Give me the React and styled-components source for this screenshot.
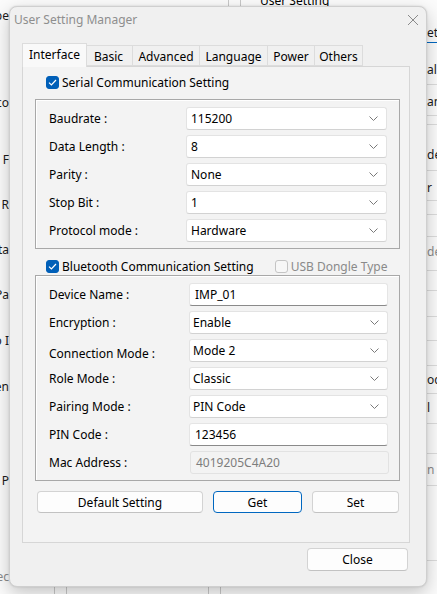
import React from "react";
import styled, { createGlobalStyle } from "styled-components";

const GlobalStyle = createGlobalStyle`
  html, body {
    margin: 0;
    padding: 0;
  }
  body {
    width: 437px;
    height: 594px;
    overflow: hidden;
    background: #fbfbfb;
    font-family: "Noto Sans", "Segoe UI", sans-serif;
    font-size: 12px;
    color: #000;
  }
`;

const Desktop = styled.div`
  position: relative;
  width: 437px;
  height: 594px;
  overflow: hidden;
  background: #fbfbfb;
`;

// --- the window behind the dialog, only its edges show ---
const BackWindow = styled.div`
  display: flex;
  height: 594px;
`;

const BackLeft = styled.div`
  width: 9px;
  display: flex;
  flex-direction: column;
  overflow: hidden;
`;

const BackLabel = styled.div`
  height: 14px;
  margin-top: ${(p) => p.gap}px;
  display: flex;
  justify-content: flex-end;
  white-space: nowrap;
  line-height: 14px;
  color: ${(p) => (p.dim ? "#8a8a8a" : "#1a1a1a")};
`;

const BackMiddle = styled.div`
  flex: 1;
  display: flex;
  flex-direction: column;
  justify-content: space-between;
`;

const BackStrip = styled.div`
  height: ${(p) => p.h}px;
  display: flex;
  align-items: ${(p) => (p.top ? "flex-end" : "flex-start")};
  padding-left: 219px;
  gap: 11px;
  overflow: hidden;
`;

const Divider = styled.div`
  width: 1px;
  height: 100%;
  background: #c8c8c8;
  margin-left: ${(p) => p.ml || 0}px;
`;

const BackHeading = styled.span`
  margin-left: 8px;
  line-height: 14px;
  height: 14px;
  align-self: flex-end;
  margin-bottom: -2px;
  white-space: nowrap;
`;

const BackRight = styled.div`
  width: 10px;
  display: flex;
  flex-direction: column;
  overflow: hidden;
`;

const BackRow = styled.div`
  height: ${(p) => p.h + 1}px;
  box-sizing: border-box;
  border-bottom: 1px solid ${(p) => (p.accent ? "#0067c0" : "#dcdcdc")};
  display: flex;
  align-items: flex-end;
  padding-bottom: ${(p) => p.pb || 0}px;
  white-space: nowrap;
  line-height: 14px;
  color: ${(p) => (p.dim ? "#8a8a8a" : "#1a1a1a")};
`;

// --- dialog ---
const Dialog = styled.div`
  position: absolute;
  left: 9px;
  top: 6px;
  width: 418px;
  height: 581px;
  box-sizing: border-box;
  background: #f0f0f0;
  border: 1px solid #cfcfcf;
  border-radius: 8px;
  box-shadow: 0 6px 18px rgba(0, 0, 0, 0.22), 0 0 2px rgba(0, 0, 0, 0.15);
  display: flex;
  flex-direction: column;
`;

const TitleBar = styled.div`
  height: 24px;
  display: flex;
  align-items: center;
  justify-content: space-between;
  padding: 0 7px 0 4px;
`;

const Title = styled.span`
  font-size: 12px;
  color: #8e8e8e;
`;

const CloseX = styled.svg`
  width: 12px;
  height: 12px;
  margin-top: 1px;
`;

const Body = styled.div`
  padding: 12px 16px 0 12px;
  display: flex;
  flex-direction: column;
`;

const TabBar = styled.div`
  display: flex;
  align-items: flex-end;
  height: 23px;
  position: relative;
  z-index: 1;
`;

const Tab = styled.div`
  width: ${(p) => p.w}px;
  box-sizing: border-box;
  height: ${(p) => (p.active ? 24 : 21)}px;
  margin-bottom: ${(p) => (p.active ? -1 : 0)}px;
  margin-right: ${(p) => (p.active ? -2 : 0)}px;
  display: flex;
  align-items: center;
  justify-content: center;
  background: ${(p) => (p.active ? "#f9f9f9" : "#f0f0f0")};
  border: 1px solid #dcdcdc;
  border-left: ${(p) => (p.active ? "1px solid #dcdcdc" : "none")};
  border-bottom: ${(p) => (p.active ? "none" : "1px solid #dcdcdc")};
  padding-bottom: ${(p) => (p.active ? 3 : 0)}px;
  padding-top: ${(p) => (p.active ? 0 : 2)}px;
  font-size: 12px;
  position: relative;
  z-index: ${(p) => (p.active ? 2 : 1)};
`;

const Panel = styled.div`
  height: 477px;
  box-sizing: border-box;
  border: 1px solid #d6d6d6;
  background: #f3f3f3;
  padding: 8px 10px 0 23px;
  display: flex;
  flex-direction: column;
`;

const CheckRow = styled.div`
  display: flex;
  align-items: center;
  height: 14px;
  margin-bottom: ${(p) => p.mb}px;
  margin-top: ${(p) => p.mt || 0}px;
`;

const CheckItem = styled.label`
  display: flex;
  align-items: center;
  gap: 3px;
  color: ${(p) => (p.disabled ? "#8a8a8a" : "#000")};
  margin-left: ${(p) => p.ml || 0}px;
  font-size: 12px;
  white-space: nowrap;
`;

const Box = styled.span`
  width: 13px;
  height: 13px;
  box-sizing: border-box;
  border-radius: 3px;
  display: inline-flex;
  align-items: center;
  justify-content: center;
  background: ${(p) => (p.checked ? "#005fb8" : "#f7f7f7")};
  border: 1px solid ${(p) => (p.checked ? "#005fb8" : "#c4c4c4")};
`;

const Group = styled.div`
  margin-left: -11px;
  width: 365px;
  box-sizing: border-box;
  border: 1px solid #a8a8a8;
  box-shadow: inset 1px 1px 0 #fff;
  padding: 7px 12px 6px 13px;
  display: flex;
  flex-direction: column;
  gap: 5px;
`;

const Row = styled.div`
  display: grid;
  grid-template-columns: ${(p) => p.col}px 1fr;
  align-items: center;
  height: 23px;
`;

const Label = styled.span`
  font-size: 12px;
  color: #000;
  position: relative;
  top: ${(p) => p.dy || 0}px;
`;

const Combo = styled.div`
  height: 23px;
  width: ${(p) => p.w}px;
  box-sizing: border-box;
  background: #fff;
  border: 1px solid #e3e3e3;
  border-bottom-color: #d2d2d2;
  border-radius: 3px;
  display: flex;
  align-items: center;
  justify-content: space-between;
  padding: 0 8px 0 ${(p) => p.pl}px;
  font-size: 12px;
`;

const Field = styled.div`
  height: 23px;
  width: 199px;
  box-sizing: border-box;
  background: ${(p) => (p.disabled ? "#f3f3f3" : "#fff")};
  border: 1px solid ${(p) => (p.disabled ? "#e2e2e2" : "#e5e5e5")};
  border-bottom-color: ${(p) => (p.disabled ? "#e2e2e2" : "#8a8a8a")};
  border-radius: 3px;
  display: flex;
  align-items: center;
  padding-left: 5px;
  margin-left: ${(p) => (p.disabled ? 1 : 0)}px;
  color: ${(p) => (p.disabled ? "#7d7d7d" : "#000")};
  font-size: 12px;
`;

const ButtonRow = styled.div`
  display: flex;
  gap: 10px;
  margin: 10px 0 0 -9px;
`;

const Button = styled.button`
  width: ${(p) => p.w}px;
  height: ${(p) => p.h || 22}px;
  box-sizing: border-box;
  background: #fdfdfd;
  border: 1px solid ${(p) => (p.primary ? "#0067c0" : "#d3d3d3")};
  border-bottom-color: ${(p) => (p.primary ? "#0067c0" : "#c2c2c2")};
  border-radius: 4px;
  font-family: "Noto Sans", "Segoe UI", sans-serif;
  font-size: 12px;
  color: #000;
  padding: 0;
`;

const Footer = styled.div`
  display: flex;
  justify-content: flex-end;
  padding: 5px 2px 0 0;
`;

const Chevron = () => (
  <svg width="9" height="5" viewBox="0 0 9 5">
    <path d="M0.5 0.5 L4.5 4.5 L8.5 0.5" fill="none" stroke="#7a7a7a" strokeWidth="1" />
  </svg>
);

const Check = ({ checked, disabled, children, ml }) => (
  <CheckItem disabled={disabled} ml={ml}>
    <Box checked={checked}>
      {checked && (
        <svg width="9" height="7" viewBox="0 0 9 7">
          <path d="M1 3.6 L3.4 6 L8 1" fill="none" stroke="#fff" strokeWidth="1.2" />
        </svg>
      )}
    </Box>
    {children}
  </CheckItem>
);

const serialRows = [
  ["Baudrate :", "115200"],
  ["Data Length :", "8"],
  ["Parity :", "None"],
  ["Stop Bit :", "1"],
  ["Protocol mode :", "Hardware"],
];

const btRows = [
  { label: "Device Name :", value: "IMP_01", kind: "field" },
  { label: "Encryption :", value: "Enable", kind: "combo" },
  { label: "Connection Mode :", value: "Mode 2", kind: "combo", dy: 3 },
  { label: "Role Mode :", value: "Classic", kind: "combo" },
  { label: "Pairing Mode :", value: "PIN Code", kind: "combo" },
  { label: "PIN Code :", value: "123456", kind: "field" },
  { label: "Mac Address :", value: "4019205C4A20", kind: "disabled" },
];

const tabs = [
  ["Interface", 65],
  ["Basic", 48],
  ["Advanced", 67],
  ["Language", 68],
  ["Power", 47],
  ["Others", 48],
];

// tails of the labels of the window behind (text, gap above)
const backLeft = [
  ["Type", 9],
  ["Protoco", 73],
  ["F", 43],
  ["R", 31],
  ["Data", 31],
  ["Pa", 31],
  ["Auto I", 32],
  ["Open", 32],
  ["P", 80],
  ["Connec", 82, true],
];

// rows of the list on the right of the window behind (text, height, bottom pad)
const backRight = [
  ["ettings", 42, 2, "accent"],
  ["al", 41, 7],
  ["and", 30, 6],
  ["", 8],
  ["de", 45, 8],
  ["r", 29, 5],
  ["", 13],
  ["", 21],
  ["de", 33, 11, "dim"],
  ["", 19],
  ["", 25],
  ["", 23],
  ["", 24],
  ["oc", 27, 6],
  ["l", 29, 8],
  ["", 29],
  ["n", 31, 8, "dim"],
  ["", 74],
];

const Background = () => (
  <BackWindow>
    <BackLeft>
      {backLeft.map(([text, gap, dim], i) => (
        <BackLabel key={i} gap={gap} dim={dim}>
          {text}
        </BackLabel>
      ))}
    </BackLeft>
    <BackMiddle>
      <BackStrip h={6} top>
        <Divider />
        <Divider />
        <BackHeading>User Setting</BackHeading>
      </BackStrip>
      <BackStrip h={7}>
        <Divider ml={-174} />
        <Divider />
        <Divider ml={130} />
        <Divider />
      </BackStrip>
    </BackMiddle>
    <BackRight>
      {backRight.map(([text, h, pb, mode], i) => (
        <BackRow key={i} h={h} pb={pb} accent={mode === "accent"} dim={mode === "dim"}>
          {text}
        </BackRow>
      ))}
    </BackRight>
  </BackWindow>
);

export default function App() {
  return (
    <Desktop>
      <GlobalStyle />
      <Background />
      <Dialog>
        <TitleBar>
          <Title>User Setting Manager</Title>
          <CloseX viewBox="0 0 12 12">
            <path d="M1 1 L11 11 M11 1 L1 11" stroke="#8a8a8a" strokeWidth="1" />
          </CloseX>
        </TitleBar>
        <Body>
          <TabBar>
            {tabs.map(([name, w], i) => (
              <Tab key={name} w={w} active={i === 0}>
                {name}
              </Tab>
            ))}
          </TabBar>
          <Panel>
            <CheckRow mb={10}>
              <Check checked>Serial Communication Setting</Check>
            </CheckRow>
            <Group>
              {serialRows.map(([label, value]) => (
                <Row key={label} col={137}>
                  <Label>{label}</Label>
                  <Combo w={201} pl={4}>
                    <span>{value}</span>
                    <Chevron />
                  </Combo>
                </Row>
              ))}
            </Group>
            <CheckRow mt={10} mb={2}>
              <Check checked>Bluetooth Communication Setting</Check>
              <Check disabled ml={21}>USB Dongle Type</Check>
            </CheckRow>
            <Group>
              {btRows.map((r) => (
                <Row key={r.label} col={140}>
                  <Label dy={r.dy}>{r.label}</Label>
                  {r.kind === "combo" ? (
                    <Combo w={199} pl={3}>
                      <span>{r.value}</span>
                      <Chevron />
                    </Combo>
                  ) : (
                    <Field disabled={r.kind === "disabled"}>{r.value}</Field>
                  )}
                </Row>
              ))}
            </Group>
            <ButtonRow>
              <Button w={166}>Default Setting</Button>
              <Button w={89} primary>Get</Button>
              <Button w={87}>Set</Button>
            </ButtonRow>
          </Panel>
          <Footer>
            <Button w={101} h={23}>Close</Button>
          </Footer>
        </Body>
      </Dialog>
    </Desktop>
  );
}
